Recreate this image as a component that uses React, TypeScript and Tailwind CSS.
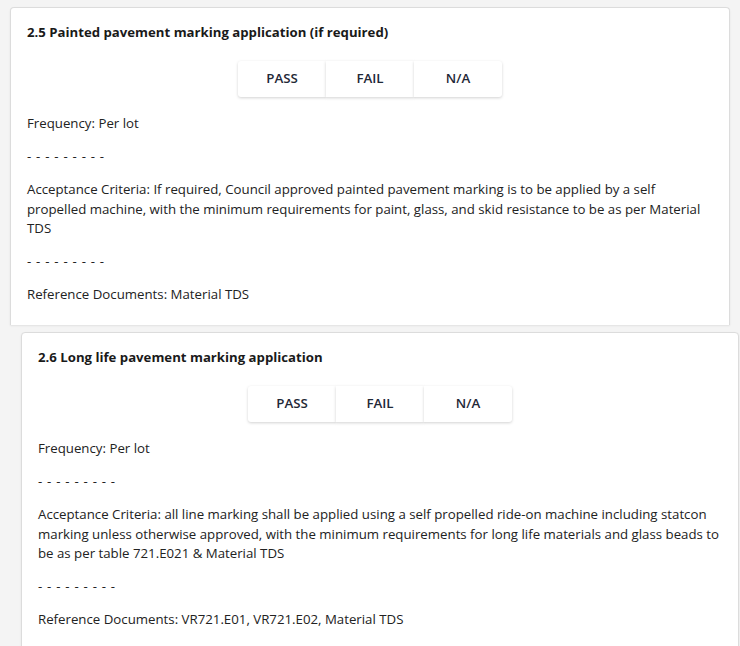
const items = [
  {
    title: '2.5 Painted pavement marking application (if required)',
    frequency: 'Per lot',
    criteria:
      'If required, Council approved painted pavement marking is to be applied by a self propelled machine, with the minimum requirements for paint, glass, and skid resistance to be as per Material TDS',
    refs: 'Material TDS',
  },
  {
    title: '2.6 Long life pavement marking application',
    frequency: 'Per lot',
    criteria:
      'all line marking shall be applied using a self propelled ride-on machine including statcon marking unless otherwise approved, with the minimum requirements for long life materials and glass beads to be as per table 721.E021 & Material TDS',
    refs: 'VR721.E01, VR721.E02, Material TDS',
  },
];

const Card = ({ item, className }: { item: (typeof items)[number]; className: string }) => (
  <div className={`bg-white border border-[#dcdcdc] shadow-[0_1px_2px_rgba(0,0,0,0.08)] px-4 pt-[15px] ${className}`}>
    <h3 className="text-[13.2px] font-bold text-[#1a1a1a] leading-[18px]">{item.title}</h3>
    <div className="flex justify-center mt-[20px]">
      {['PASS', 'FAIL', 'N/A'].map((label) => (
        <button
          key={label}
          className="w-[88px] h-[36px] bg-white text-[13.3px] font-semibold text-[#1f2937] shadow-[0_1px_3px_rgba(0,0,0,0.18)] first:rounded-l-[3px] last:rounded-r-[3px]"
        >
          {label}
        </button>
      ))}
    </div>
    <div className="text-[13.25px] leading-[19.5px] text-[#222] mt-[17px] space-y-[13.5px]">
      <p>Frequency: {item.frequency}</p>
      <p className="tracking-[0.7px]">- - - - - - - - -</p>
      <p>Acceptance Criteria: {item.criteria}</p>
      <p className="tracking-[0.7px]">- - - - - - - - -</p>
      <p>Reference Documents: {item.refs}</p>
    </div>
  </div>
);

export default function App() {
  return (
    <div
      className="w-[740px] h-[646px] overflow-hidden bg-[#f4f4f4] pt-[7px]"
      style={{ fontFamily: '"Open Sans", "Noto Sans", sans-serif' }}
    >
      <Card item={items[0]} className="ml-[10px] mr-[10px] h-[318px] overflow-hidden rounded-t-[4px] border-b-0" />
      <Card item={items[1]} className="ml-[21px] mr-[1px] mt-[7px] h-[330px] rounded-[4px]" />
    </div>
  );
}
